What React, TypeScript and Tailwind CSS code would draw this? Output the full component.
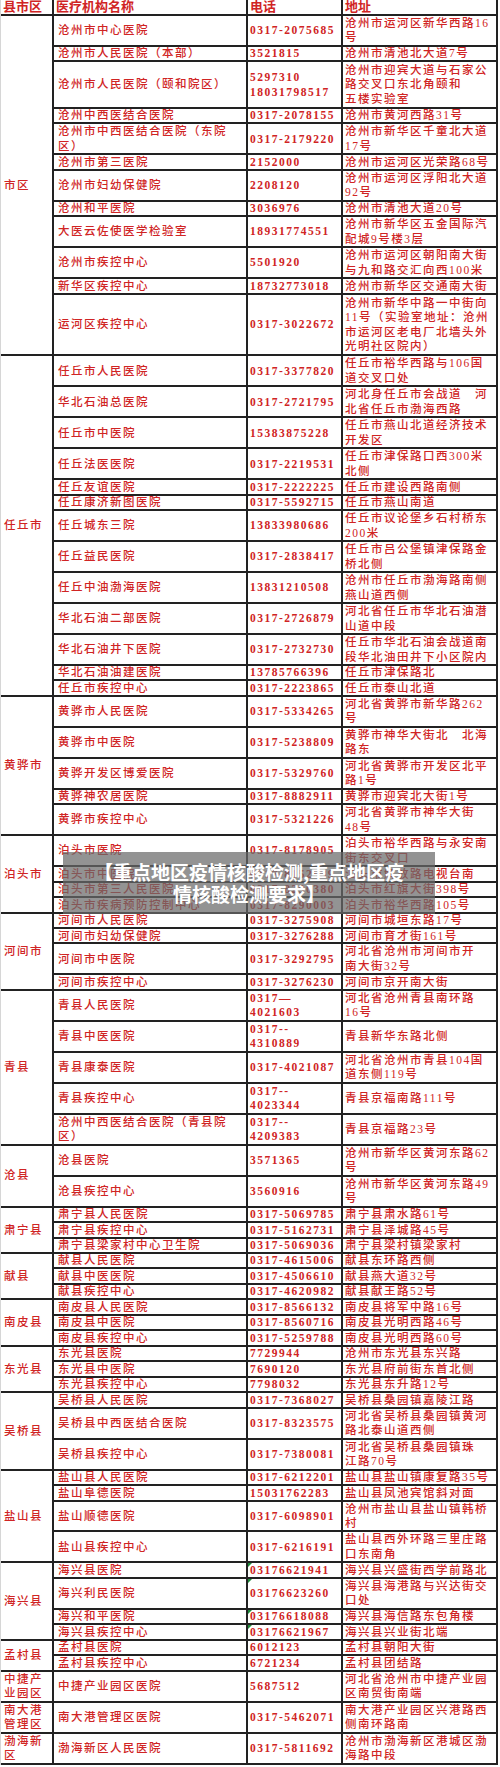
import React from "react";

type Row = {
  name: string;
  phone: string;
  addr: string;
  n: number;
  flag?: boolean;
};

type Group = {
  label: string;
  rows: Row[];
};

const H: Record<number, string> = {
  1: "h-[15.48px]",
  2: "h-[30.96px]",
  3: "h-[46.44px]",
  4: "h-[61.92px]",
};

const r = (name: string, phone: string, addr: string, n = 1, flag = false): Row => ({
  name,
  phone,
  addr,
  n,
  flag,
});

const groups: Group[] = [
  {
    label: "市区",
    rows: [
      r("沧州市中心医院", "0317-2075685", "沧州市运河区新华西路16/号", 2),
      r("沧州市人民医院（本部）", "3521815", "沧州市清池北大道7号"),
      r("沧州市人民医院（颐和院区）", "5297310/18031798517", "沧州市迎宾大道与石家公/路交叉口东北角颐和/五楼实验室", 3),
      r("沧州中西医结合医院", "0317-2078155", "沧州市黄河西路31号"),
      r("沧州市中西医结合医院（东院/区）", "0317-2179220", "沧州市新华区千童北大道/17号", 2),
      r("沧州市第三医院", "2152000", "沧州市运河区光荣路68号"),
      r("沧州市妇幼保健院", "2208120", "沧州市运河区浮阳北大道/92号", 2),
      r("沧州和平医院", "3036976", "沧州市清池大道20号"),
      r("大医云佐使医学检验室", "18931774551", "沧州市新华区五金国际汽/配城9号楼3层", 2),
      r("沧州市疾控中心", "5501920", "沧州市运河区朝阳南大街/与九和路交汇向西100米", 2),
      r("新华区疾控中心", "18732773018", "沧州市新华区交通南大街"),
      r("运河区疾控中心", "0317-3022672", "沧州市新华中路一中街向/11号（实验室地址：沧州/市运河区老电厂北墙头外/光明社区院内）", 4),
    ],
  },
  {
    label: "任丘市",
    rows: [
      r("任丘市人民医院", "0317-3377820", "任丘市裕华西路与106国/道交叉口处", 2),
      r("华北石油总医院", "0317-2721795", "河北身任丘市会战道　河/北省任丘市渤海西路", 2),
      r("任丘市中医院", "15383875228", "任丘市燕山北道经济技术/开发区", 2),
      r("任丘法医医院", "0317-2219531", "任丘市津保路口西300米/北侧", 2),
      r("任丘友谊医院", "0317-2222225", "任丘市建设西路南侧"),
      r("任丘康济新图医院", "0317-5592715", "任丘市燕山南道"),
      r("任丘城东三院", "13833980686", "任丘市议论堡乡石村桥东/200米", 2),
      r("任丘益民医院", "0317-2838417", "任丘市吕公堡镇津保路金/桥北侧", 2),
      r("任丘中油渤海医院", "13831210508", "沧州市任丘市渤海路南侧/燕山道西侧", 2),
      r("华北石油二部医院", "0317-2726879", "河北省任丘市华北石油潜/山道中段", 2),
      r("华北石油井下医院", "0317-2732730", "任丘市华北石油会战道南/段华北油田井下小区院内", 2),
      r("华北石油油建医院", "13785766396", "任丘市津保路北"),
      r("任丘市疾控中心", "0317-2223865", "任丘市泰山北道"),
    ],
  },
  {
    label: "黄骅市",
    rows: [
      r("黄骅市人民医院", "0317-5334265", "河北省黄骅市新华路262/号", 2),
      r("黄骅市中医院", "0317-5238809", "黄骅市神华大街北　北海/路东", 2),
      r("黄骅开发区博爱医院", "0317-5329760", "河北省黄骅市开发区北平/路1号", 2),
      r("黄骅神农居医院", "0317-8882911", "黄骅市迎宾北大街1号"),
      r("黄骅市疾控中心", "0317-5321226", "河北省黄骅市神华大街/48号", 2),
    ],
  },
  {
    label: "泊头市",
    rows: [
      r("泊头市医院", "0317-8178905", "泊头市裕华西路与永安南/街东交叉口", 2),
      r("泊头市中医院", "0317-8152939", "泊头市解放路电视台南"),
      r("泊头市第三人民医院", "0317-8290380", "泊头市红旗大街398号"),
      r("泊头市疾病预防控制中心", "0317-8290003", "泊头市裕华西路105号"),
    ],
  },
  {
    label: "河间市",
    rows: [
      r("河间市人民医院", "0317-3275908", "河间市城垣东路17号"),
      r("河间市妇幼保健院", "0317-3276288", "河间市育才街161号"),
      r("河间市中医院", "0317-3292795", "河北省沧州市河间市开/南大街32号", 2),
      r("河间市疾控中心", "0317-3276230", "河间市京开南大街"),
    ],
  },
  {
    label: "青县",
    rows: [
      r("青县人民医院", "0317—/4021603", "河北省沧州青县南环路/16号", 2),
      r("青县中医医院", "0317--/4310889", "青县新华东路北侧", 2),
      r("青县康泰医院", "0317-4021087", "河北省沧州市青县104国/道东侧119号", 2),
      r("青县疾控中心", "0317--/4023344", "青县京福南路111号", 2),
      r("沧州中西医结合医院（青县院/区）", "0317--/4209383", "青县京福路23号", 2),
    ],
  },
  {
    label: "沧县",
    rows: [
      r("沧县医院", "3571365", "沧州市新华区黄河东路62/号", 2),
      r("沧县疾控中心", "3560916", "沧州市新华区黄河东路49/号", 2),
    ],
  },
  {
    label: "肃宁县",
    rows: [
      r("肃宁县人民医院", "0317-5069785", "肃宁县肃水路61号"),
      r("肃宁县疾控中心", "0317-5162731", "肃宁县泽城路45号"),
      r("肃宁县梁家村中心卫生院", "0317-5069036", "肃宁县梁村镇梁家村"),
    ],
  },
  {
    label: "献县",
    rows: [
      r("献县人民医院", "0317-4615006", "献县东环路西侧"),
      r("献县中医医院", "0317-4506610", "献县燕大道32号"),
      r("献县疾控中心", "0317-4620982", "献县献王路52号"),
    ],
  },
  {
    label: "南皮县",
    rows: [
      r("南皮县人民医院", "0317-8566132", "南皮县将军中路16号"),
      r("南皮县中医院", "0317-8560716", "南皮县光明西路46号"),
      r("南皮县疾控中心", "0317-5259788", "南皮县光明西路60号"),
    ],
  },
  {
    label: "东光县",
    rows: [
      r("东光县医院", "7729944", "沧州市东光县东兴路"),
      r("东光县中医院", "7690120", "东光县府前街东首北侧"),
      r("东光县疾控中心", "7798032", "东光县东升路12号"),
    ],
  },
  {
    label: "吴桥县",
    rows: [
      r("吴桥县人民医院", "0317-7368027", "吴桥县桑园镇嘉陵江路"),
      r("吴桥县中西医结合医院", "0317-8323575", "河北省吴桥县桑园镇黄河/路北泰山道西侧", 2),
      r("吴桥县疾控中心", "0317-7380081", "河北省吴桥县桑园镇珠/江路70号", 2),
    ],
  },
  {
    label: "盐山县",
    rows: [
      r("盐山县人民医院", "0317-6212201", "盐山县盐山镇康复路35号"),
      r("盐山阜德医院", "15031762283", "盐山县凤池宾馆斜对面"),
      r("盐山顺德医院", "0317-6098901", "沧州市盐山县盐山镇韩桥/村", 2),
      r("盐山县疾控中心", "0317-6216191", "盐山县西外环路三里庄路/口东南角", 2),
    ],
  },
  {
    label: "海兴县",
    rows: [
      r("海兴县医院", "03176621941", "海兴县兴盛街西学前路北", 1, true),
      r("海兴利民医院", "03176623260", "海兴县海港路与兴达街交/口处", 2, true),
      r("海兴和平医院", "03176618088", "海兴县海信路东包角楼", 1, true),
      r("海兴县疾控中心", "03176621967", "海兴县兴业街北端", 1, true),
    ],
  },
  {
    label: "孟村县",
    rows: [
      r("孟村县医院", "6012123", "孟村县朝阳大街"),
      r("孟村县疾控中心", "6721234", "孟村县团结路"),
    ],
  },
  {
    label: "中捷产/业园区",
    rows: [r("中捷产业园区医院", "5687512", "河北省沧州市中捷产业园/区南贸街南端", 2)],
  },
  {
    label: "南大港/管理区",
    rows: [r("南大港管理区医院", "0317-5462071", "南大港产业园区兴港路西/侧南环路南", 2)],
  },
  {
    label: "渤海新/区",
    rows: [r("渤海新区人民医院", "0317-5811692", "沧州市渤海新区港城区渤/海路中段", 2)],
  },
];

const Lines = ({ text }: { text: string }) => (
  <div className="whitespace-nowrap">
    {text.split("/").map((t, i) => (
      <div key={i}>{t}</div>
    ))}
  </div>
);

export default function App() {
  return (
    <div
      className="relative w-[500px] bg-white text-[#d02424]"
      style={{ fontFamily: '"Liberation Serif", "Noto Sans CJK SC", serif' }}
    >
      <div className="w-[498px] border-l border-l-[#d6d6d6]">
        {/* header */}
        <div className="flex h-[16px] border-b-2 border-[#222] text-[13px] font-bold leading-[14px]">
          <div className="w-[53px] border-r-2 border-[#222] pl-[2px]">县市区</div>
          <div className="w-[194px] border-r-2 border-[#222] pl-[2px]">医疗机构名称</div>
          <div className="w-[95px] border-r-2 border-[#222] pl-[2px]">电话</div>
          <div className="w-[155px] border-r-2 border-[#222] pl-[2px]">地址</div>
        </div>

        {groups.map((g) => (
          <div key={g.label} className="flex text-[11.5px] font-medium leading-[14.5px] tracking-[1.5px]">
            <div className="flex w-[53px] items-center border-r-2 border-b-2 border-[#222] pl-[3px]">
              <Lines text={g.label} />
            </div>
            <div className="flex-1">
              {g.rows.map((row, i) => (
                <div key={i} className={`flex ${H[row.n]} border-b-2 border-[#222]`}>
                  <div className="flex w-[194px] items-center border-r-2 border-[#222] pl-[4px]">
                    <Lines text={row.name} />
                  </div>
                  <div className="relative flex w-[95px] items-center border-r-2 border-[#222] pl-[2px] font-bold">
                    {row.flag && (
                      <span className="absolute left-0 top-0 h-0 w-0 border-t-[4px] border-r-[4px] border-t-[#1e8a3a] border-r-transparent" />
                    )}
                    <Lines text={row.phone} />
                  </div>
                  <div className="flex w-[155px] items-center border-r-2 border-[#222] pl-[2px]">
                    <Lines text={row.addr} />
                  </div>
                </div>
              ))}
            </div>
          </div>
        ))}
      </div>

      {/* caption overlay */}
      <div
        className="absolute left-[63px] top-[852px] flex h-[62px] w-[372px] flex-col items-center justify-center bg-[rgba(105,105,105,0.72)] text-[19px] font-bold leading-[22px] text-white"
        style={{ fontFamily: '"Noto Sans CJK SC", sans-serif' }}
      >
        <div>【重点地区疫情核酸检测,重点地区疫</div>
        <div>情核酸检测要求】</div>
      </div>
    </div>
  );
}
